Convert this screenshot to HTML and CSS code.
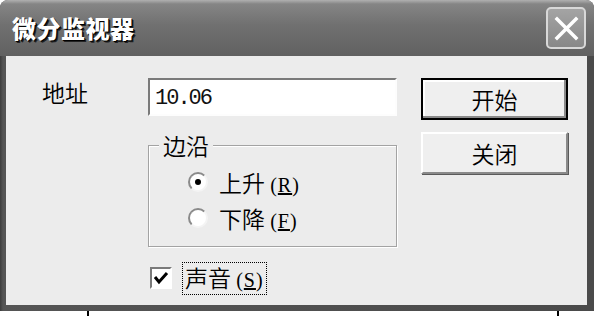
FILE: index.html
```html
<!DOCTYPE html>
<html lang="zh">
<head>
    <meta charset="UTF-8">
    <title>微分监视器</title>
    <link rel="stylesheet" href="styles.css">
</head>
<body>
    <div class="window">
        <div class="titlebar">
            <span class="title">微分监视器</span>
            <span class="close">
                <svg width="27" height="27" viewBox="0 0 27 27">
                    <path d="M4 4 L23 23 M23 4 L4 23" stroke="#fff" stroke-width="3.5" stroke-linecap="square"/>
                </svg>
            </span>
        </div>
        <div class="client">
            <div class="left">
                <div class="addr-row">
                    <label class="addr-label" for="addr">地址</label>
                    <input class="addr-input" id="addr" type="text" value="10.06">
                </div>
                <div class="group">
                    <span class="group-title">边沿</span>
                    <div class="radio-row">
                        <span class="radio"><span class="dot"></span></span>
                        <span>上升 <span class="key">(<u>R</u>)</span></span>
                    </div>
                    <div class="radio-row">
                        <span class="radio"></span>
                        <span>下降 <span class="key">(<u>F</u>)</span></span>
                    </div>
                </div>
                <div class="check-row">
                    <span class="checkbox">
                        <svg width="18" height="18" viewBox="0 0 18 18">
                            <path d="M3 8 L7 13 L15 4" stroke="#000" stroke-width="3" fill="none"/>
                        </svg>
                    </span>
                    <span class="check-label">声音 <span class="key">(<u>S</u>)</span></span>
                </div>
            </div>
            <div class="buttons">
                <button class="btn default">开始</button>
                <button class="btn">关闭</button>
            </div>
        </div>
    </div>
    <div class="ticks">
        <span class="tick"></span>
        <span class="tick"></span>
    </div>
</body>
</html>
```

FILE: styles.css
```css
body {
    margin: 0;
    background: #fff;
    font-family: "Noto Sans CJK SC", sans-serif;
    font-weight: 350;
    font-size: 23px;
    color: #000;
}

.window {
    width: 594px;
    height: 311px;
    box-sizing: border-box;
    display: flex;
    flex-direction: column;
    background: linear-gradient(to right, #3c3c3c, #555 3px, #4a4a4a);
    border-radius: 8px 8px 0 0;
    overflow: hidden;
}

.titlebar {
    height: 56px;
    flex: none;
    display: flex;
    align-items: center;
    justify-content: space-between;
    padding: 0 8px 0 12px;
    background: linear-gradient(to bottom, #b0b0b0 0, #858585 4px, #707070 45%, #616161 100%);
}

.title {
    color: #fff;
    font-weight: 900;
    font-size: 24px;
    letter-spacing: 0.5px;
    text-shadow: 1px 1px 0 #000, 2px 2px 0 #222;
    margin-top: -2px;
}

.close {
    width: 36px;
    height: 38px;
    border: 2px solid #d8d8d8;
    border-radius: 5px;
    background: linear-gradient(to bottom, #a4a4a4, #888);
    display: flex;
    align-items: center;
    justify-content: center;
}

.client {
    flex: 1;
    margin: 0 7px 6px 6px;
    background: #ececec;
    display: flex;
    padding-top: 22px;
}

.left {
    width: 391px;
}

.addr-row {
    display: flex;
    height: 38px;
}

.addr-label {
    width: 106px;
    padding-left: 36px;
    line-height: 28px;
}

.addr-input {
    width: 249px;
    height: 38px;
    box-sizing: border-box;
    margin: 0;
    border: 2px solid;
    border-color: #7a7a7a #fdfdfd #fdfdfd #7a7a7a;
    background: #fff;
    padding: 2px 0 0 5px;
    font-family: "Liberation Mono", monospace;
    font-size: 22px;
    letter-spacing: -2px;
    color: #111;
    outline: none;
}

.group {
    position: relative;
    margin: 29px 0 0 142px;
    height: 102px;
    box-sizing: border-box;
    border: 1px solid #a3a3a3;
    box-shadow: 1px 1px 0 #fff, inset 1px 1px 0 #fff;
    padding: 18px 0 0 39px;
}

.group-title {
    position: absolute;
    top: -16px;
    left: 10px;
    padding: 0 4px;
    background: #ececec;
    line-height: 30px;
}

.radio-row {
    height: 36px;
    display: flex;
    align-items: center;
    gap: 11px;
}

.radio {
    width: 20px;
    height: 20px;
    box-sizing: border-box;
    border-radius: 50%;
    border: 2px solid;
    border-color: #8a8a8a #f4f4f4 #f4f4f4 #8a8a8a;
    background: #fff;
    display: flex;
    align-items: center;
    justify-content: center;
}

.dot {
    width: 6px;
    height: 6px;
    border-radius: 50%;
    background: #000;
}

.key {
    font-family: "Liberation Serif", serif;
    font-weight: normal;
    font-size: 20px;
    letter-spacing: 1px;
}

.check-row {
    margin: 16px 0 0 144px;
    height: 30px;
    display: flex;
    align-items: center;
    gap: 10px;
}

.checkbox {
    width: 22px;
    height: 22px;
    box-sizing: border-box;
    border: 2px solid;
    border-color: #7a7a7a #fff #fff #7a7a7a;
    background: #fff;
    display: flex;
    align-items: center;
    justify-content: center;
}

.check-label {
    border: 1px dotted #000;
    padding: 0 2px;
    line-height: 28px;
}

.buttons {
    margin-left: 24px;
    display: flex;
    flex-direction: column;
    gap: 12px;
}

.btn {
    width: 147px;
    height: 42px;
    margin: 0;
    padding: 0;
    font-family: "Noto Sans CJK SC", sans-serif;
    font-weight: 350;
    font-size: 23px;
    color: #000;
    background: #efefef;
    border: 2px solid;
    border-color: #fff #8a8a8a #8a8a8a #fff;
    box-shadow: 1px 1px 0 #5a5a5a;
}

.btn.default {
    border: 2px solid #000;
    box-shadow: inset -2px -2px 0 #8a8a8a, inset 2px 2px 0 #fff;
}

.ticks {
    display: flex;
    padding-left: 87px;
    gap: 468px;
}

.tick {
    width: 2px;
    height: 5px;
    background: #000;
}
```
